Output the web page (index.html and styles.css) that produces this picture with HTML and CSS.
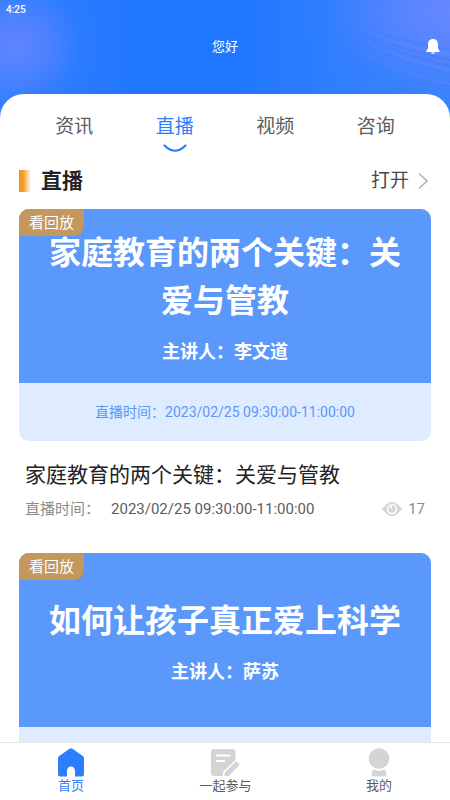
FILE: index.html
```html
<!DOCTYPE html>
<html lang="zh-CN">
<head>
<meta charset="utf-8">
<meta name="viewport" content="width=device-width, initial-scale=1">
<title>直播</title>
<link rel="stylesheet" href="styles.css">
</head>
<body>
<div class="app">
  <header class="header">
    <svg class="header-waves" viewBox="0 0 225 120" preserveAspectRatio="xMaxYMin slice" aria-hidden="true">
      <defs>
        <linearGradient id="fade" gradientUnits="userSpaceOnUse" x1="100" y1="0" x2="225" y2="0">
          <stop offset="0" stop-color="#3672f0" stop-opacity="0"/>
          <stop offset=".5" stop-color="#3672f0" stop-opacity=".35"/>
          <stop offset="1" stop-color="#3672f0" stop-opacity=".45"/>
        </linearGradient>
        <linearGradient id="glow" gradientUnits="userSpaceOnUse" x1="100" y1="0" x2="225" y2="0">
          <stop offset="0" stop-color="#7ba0ff" stop-opacity="0"/>
          <stop offset="1" stop-color="#7ba0ff" stop-opacity=".35"/>
        </linearGradient>
      </defs>
      <g fill="none" stroke="url(#fade)">
        <path d="M112 24C145 34 165 48 225 60"/>
        <path d="M116 28C148 38 165 53 225 66"/>
        <path d="M118 33C146 46 164 60 225 74"/>
        <path d="M140 28C160 35 185 42 225 50"/>
      </g>
      <g fill="none" stroke="url(#glow)">
        <path d="M114 31C146 42 164 57 225 70"/>
        <path d="M130 28C160 40 180 46 225 55"/>
        <path d="M120 44C145 54 160 68 225 84"/>
      </g>
    </svg>
    <div class="status">4:25</div>
    <div class="titlebar">
      <h1 class="greeting">您好</h1>
      <button class="bell" type="button" aria-label="通知">
        <svg width="14" height="16" viewBox="0 0 14 16" aria-hidden="true">
          <path fill="#fff" d="M7 0C3.600 0 2 2.300 2 5.200V9.500L.7 11.300C0 12.300.2 13 1.200 13H12.800C13.800 13 14 12.300 13.300 11.300L12 9.500V5.200C12 2.300 10.400 0 7 0ZM4.800 13.600A2.300 2.100 0 0 0 9.200 13.600Z"/>
        </svg>
      </button>
    </div>
  </header>

  <main class="sheet">
    <nav class="tabs">
      <a class="tab" href="#news">资讯</a>
      <a class="tab tab-active" href="#live">直播
        <svg width="24" height="9" viewBox="0 0 24 9" aria-hidden="true"><path d="M1.500 1.500Q12 12 22.500 1.500" fill="none" stroke="#2d7dff" stroke-width="2.200" stroke-linecap="round"/></svg>
      </a>
      <a class="tab" href="#video">视频</a>
      <a class="tab" href="#consult">咨询</a>
    </nav>

    <div class="section-head">
      <h2 class="section-title">直播</h2>
      <a class="more" href="#all">打开
        <svg width="10" height="18" viewBox="0 0 10 18" aria-hidden="true"><path d="M1 1.500L9 9L1 16.500" fill="none" stroke="#b4b4b4" stroke-width="1.600"/></svg>
      </a>
    </div>

    <article class="lesson">
      <div class="cover">
        <span class="badge">看回放</span>
        <div class="cover-main">
          <div class="cover-title">家庭教育的两个关键：关爱与管教</div>
          <div class="cover-speaker">主讲人：李文道</div>
        </div>
        <div class="cover-time">直播时间：2023/02/25 09:30:00-11:00:00</div>
      </div>
      <h3 class="lesson-title">家庭教育的两个关键：关爱与管教</h3>
      <div class="meta">
        <span>直播时间：</span>
        <span class="meta-time">2023/02/25 09:30:00-11:00:00</span>
        <span class="views">
          <svg width="20" height="14" viewBox="0 0 20 14" aria-hidden="true">
            <path fill="#d6d6d6" d="M0 7C4 1.800 7 0 10 0S16 1.800 20 7C16 12.200 13 14 10 14S4 12.200 0 7Z"/>
            <circle cx="10" cy="7" r="4.400" fill="none" stroke="#fff" stroke-width="1.500"/>
            <path d="M10 7V3.500A3.500 3.500 0 0 0 7.500 5Z" fill="#fff"/>
          </svg>
          17
        </span>
      </div>
    </article>

    <article class="lesson">
      <div class="cover">
        <span class="badge">看回放</span>
        <div class="cover-main">
          <div class="cover-title">如何让孩子真正爱上科学</div>
          <div class="cover-speaker">主讲人：萨苏</div>
        </div>
        <div class="cover-time"></div>
      </div>
    </article>
  </main>

  <nav class="bottom-nav">
    <a class="nav-item nav-active" href="#home">
      <svg width="28" height="29" viewBox="0 0 28 29" aria-hidden="true"><path fill="#2d7dff" d="M12.200 1Q14 -.3 15.800 1L25.800 8Q27 9 27 10.500V26.500Q27 28.500 25 28.500H18V23A4 4.500 0 0 0 10 23V28.500H3Q1 28.500 1 26.500V10.500Q1 9 2.200 8Z"/></svg>
      首页
    </a>
    <a class="nav-item" href="#join">
      <svg width="30" height="29" viewBox="0 0 30 29" aria-hidden="true">
        <path fill="#d4d4d4" d="M4 1H22Q25.500 1 25.500 4.500V12L13 24V28H4Q1 28 1 25V4Q1 1 4 1Z"/>
        <path d="M6 7.500H20.500M6 13H15" stroke="#fff" stroke-width="2"/>
        <path d="M26.500 16.500L17.500 25.500" stroke="#d4d4d4" stroke-width="5" stroke-linecap="round"/>
        <path fill="#d4d4d4" d="M15 24L20 28H14.500Z"/>
      </svg>
      一起参与
    </a>
    <a class="nav-item" href="#me">
      <svg width="22" height="29" viewBox="0 0 22 29" aria-hidden="true"><circle cx="11" cy="10.500" r="10.300" fill="#d4d4d4"/><path fill="#d4d4d4" d="M5.500 21.500Q11 24 16.500 21.500Q18.500 23 18.500 26Q18.500 28.500 16.500 28.500H5.500Q3.500 28.500 3.500 26Q3.500 23 5.500 21.500Z"/></svg>
      我的
    </a>
  </nav>
</div>
</body>
</html>
```
FILE: styles.css
```css
* {
  box-sizing: border-box;
}

body {
  margin: 0;
  font-family: Roboto, "Noto Sans CJK SC", sans-serif;
  color: #222;
  background: #fff;
}

h1, h2, h3 {
  margin: 0;
  font-weight: 400;
}

a {
  color: inherit;
  text-decoration: none;
}

svg {
  display: block;
  flex: none;
}

.app {
  display: flex;
  flex-direction: column;
  height: 100vh;
  overflow: hidden;
}

.header {
  position: relative;
  flex: none;
  padding-bottom: 60px;
  color: #fff;
  background:
    radial-gradient(ellipse 85px 75px at 16px 46px, rgba(100, 133, 255, 0.95) 0%, rgba(92, 132, 255, 0.7) 35%, rgba(60, 125, 255, 0.2) 75%, rgba(45, 125, 255, 0) 100%),
    radial-gradient(ellipse 150px 95px at 100% 14px, #6688ff 0%, rgba(91, 132, 255, 0.8) 40%, rgba(60, 125, 255, 0.25) 80%, rgba(45, 125, 255, 0) 100%),
    linear-gradient(90deg, #3380ff 0%, #2277ff 30%, #1f76ff 50%, #2f7fff 75%, #3d84fb 100%);
}

.header-waves {
  position: absolute;
  top: 0;
  right: 0;
  width: 225px;
  height: 120px;
}

.status {
  position: relative;
  padding-left: 6px;
  font-size: 10px;
  font-weight: 500;
  line-height: 20px;
}

.titlebar {
  position: relative;
  display: grid;
  grid-template-columns: 1fr auto 1fr;
  align-items: center;
  padding: 0 10px;
  height: 54px;
}

.greeting {
  grid-column: 2;
  font-size: 13px;
  line-height: 20px;
}

.bell {
  justify-self: end;
  padding: 0;
  border: 0;
  background: none;
}

.sheet {
  position: relative;
  flex: 1;
  min-height: 0;
  margin-top: -40px;
  overflow: hidden;
  border-radius: 24px 24px 0 0;
  background: #fff;
}

.tabs {
  display: grid;
  grid-template-columns: repeat(4, 1fr);
  padding: 18px 24px 0;
  height: 67px;
}

.tab {
  display: flex;
  flex-direction: column;
  align-items: center;
  gap: 2px;
  color: #5c5c5c;
  font-size: 19px;
  line-height: 30px;
}

.tab-active {
  color: #2d7dff;
}

.section-head {
  display: flex;
  align-items: center;
  justify-content: space-between;
  height: 40px;
  padding: 0 22px 0 19px;
}

.section-title {
  display: flex;
  align-items: center;
  gap: 10px;
  font-size: 21px;
  font-weight: 700;
  line-height: 30px;
}

.section-title::before {
  content: "";
  width: 12px;
  height: 22px;
  background: linear-gradient(90deg, #f29312 0%, #f4a133 40%, #fff 100%);
}

.more {
  display: flex;
  align-items: center;
  gap: 9px;
  color: #4a4a4a;
  font-size: 19px;
  line-height: 30px;
}

.lesson {
  padding: 8px 19px 24px;
}

.cover {
  position: relative;
  overflow: hidden;
  border-radius: 10px;
  background: #dfebff;
}

.badge {
  position: absolute;
  top: 0;
  left: 0;
  padding: 1px 10px 0;
  border-bottom-right-radius: 10px;
  color: #fff;
  background: #c4975d;
  font-size: 15px;
  line-height: 26px;
}

.cover-main {
  display: flex;
  flex-direction: column;
  align-items: center;
  justify-content: center;
  gap: 13px;
  min-height: 174px;
  padding: 2px 24px 0;
  color: #fff;
  background: #5a98fb;
  font-weight: 700;
  text-align: center;
}

.cover-title {
  font-size: 32px;
  line-height: 48px;
}

.cover-speaker {
  font-size: 18px;
  line-height: 28px;
}

.cover-time {
  min-height: 58px;
  color: #5a98fb;
  font-size: 14px;
  line-height: 58px;
  text-align: center;
}

.lesson-title {
  padding: 17px 6px 0;
  font-size: 21px;
  line-height: 34px;
}

.meta {
  display: flex;
  align-items: center;
  padding: 5px 6px 0;
  color: #8c8c8c;
  font-size: 15px;
  line-height: 24px;
}

.meta-time {
  margin-left: 11px;
  color: #5c5c5c;
}

.views {
  display: flex;
  align-items: center;
  gap: 6px;
  margin-left: auto;
}

.bottom-nav {
  position: relative;
  display: flex;
  flex: none;
  justify-content: space-between;
  height: 58px;
  padding: 5px 58px 0 57px;
  border-top: 1px solid #e6e6e6;
  background: #fff;
}

.nav-item {
  display: flex;
  flex-direction: column;
  align-items: center;
  color: #5c5c5c;
  font-size: 13px;
  line-height: 18px;
}

.nav-active {
  color: #2d7dff;
}
```
